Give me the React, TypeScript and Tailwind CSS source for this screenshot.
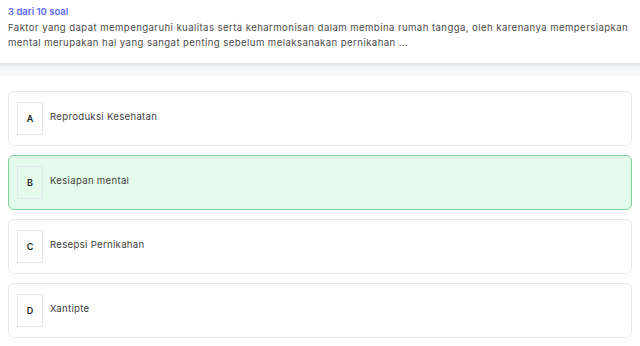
import React from "react";

const options = [
  { k: "A", t: "Reproduksi Kesehatan", sel: false },
  { k: "B", t: "Kesiapan mental", sel: true },
  { k: "C", t: "Resepsi Pernikahan", sel: false },
  { k: "D", t: "Xantipte", sel: false },
];

export default function App() {
  return (
    <div className="w-[640px] h-[346px] bg-white overflow-hidden" style={{ fontFamily: "Inter, 'Noto Sans', sans-serif" }}>
      <div className="relative z-10 bg-white px-[8px] pt-[4px] pb-[13px] shadow-[0_2px_3px_rgba(0,0,0,0.12)]">
        <div className="text-[9.5px] leading-[16px] font-semibold text-[#5b6af1]">3 dari 10 soal</div>
        <div className="text-[9.6px] leading-[15px] text-[#4a4a4a] tracking-[0.42px]">
          Faktor yang dapat mempengaruhi kualitas serta keharmonisan dalam membina rumah tangga, oleh karenanya mempersiapkan mental merupakan hal yang sangat penting sebelum melaksanakan pernikahan ...
        </div>
      </div>
      <div className="h-[13px] bg-[#f7f8fa]" />
      <div className="flex flex-col gap-[9px] px-[8px] pt-[15px]">
        {options.map((o) => (
          <div
            key={o.k}
            className={
              o.sel
                ? "flex items-center h-[55px] rounded-[6px] border border-[#7fd49e] bg-[#e4fbeb] px-[8px]"
                : "flex items-center h-[55px] rounded-[6px] border border-[#e5e8ef] bg-white px-[8px]"
            }
          >
            <div className="w-[26px] h-[33px] flex items-center justify-center border border-[#e3e6ec] text-[9px] font-semibold text-[#222]">
              {o.k}
            </div>
            <div className="ml-[7px] text-[9.6px] text-[#3d3d3d] -mt-[2px] tracking-[0.3px]">{o.t}</div>
          </div>
        ))}
      </div>
    </div>
  );
}
